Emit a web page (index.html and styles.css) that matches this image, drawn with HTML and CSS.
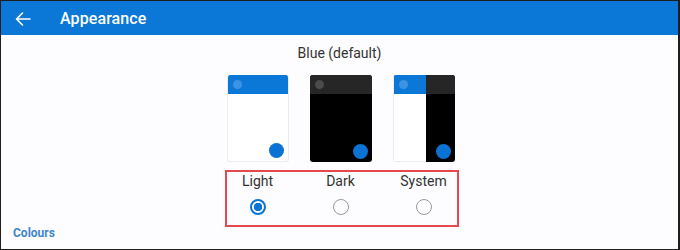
FILE: index.html
```html
<!DOCTYPE html>
<html lang="en">
<head>
    <meta charset="UTF-8">
    <meta name="viewport" content="width=device-width, initial-scale=1.0">
    <title>Appearance</title>
    <link rel="stylesheet" href="styles.css">
</head>
<body>
    <div class="frame">
        <header class="topbar">
            <svg class="back" width="16" height="14" viewBox="0 0 16 14">
                <path d="M15 7H1.5 M7.5 1 L1.5 7 L7.5 13" fill="none" stroke="#fff" stroke-width="1.6" stroke-linecap="round" stroke-linejoin="round"/>
            </svg>
            <span class="title">Appearance</span>
        </header>

        <main class="content">
            <p class="theme-name">Blue (default)</p>

            <div class="cards">
                <div class="card light">
                    <div class="card-head"><span class="dot"></span></div>
                    <span class="fab"></span>
                </div>
                <div class="card dark">
                    <div class="card-head"><span class="dot"></span></div>
                    <span class="fab"></span>
                </div>
                <div class="card system">
                    <div class="half half-light">
                        <div class="card-head"><span class="dot"></span></div>
                    </div>
                    <div class="half half-dark">
                        <div class="card-head"></div>
                    </div>
                    <span class="fab"></span>
                </div>
            </div>

            <div class="modes">
                <label class="mode">
                    <span class="mode-label">Light</span>
                    <span class="radio checked"></span>
                </label>
                <label class="mode">
                    <span class="mode-label">Dark</span>
                    <span class="radio"></span>
                </label>
                <label class="mode">
                    <span class="mode-label">System</span>
                    <span class="radio"></span>
                </label>
            </div>

            <div class="section-title">Colours</div>
        </main>
    </div>
</body>
</html>
```

FILE: styles.css
```css
* {
    box-sizing: border-box;
}
body {
    margin: 0;
    font-family: Roboto, "Noto Sans", sans-serif;
    background: #1e1e1e;
}
.frame {
    width: 680px;
    height: 250px;
    border: 1px solid #1e1e1e;
    border-right-width: 2px;
    background: #fdfcfe;
    overflow: hidden;
}
.topbar {
    height: 34px;
    background: #0b78d7;
    display: flex;
    align-items: center;
    padding-left: 14px;
    color: #fff;
}
.back {
    margin-right: 29px;
    margin-top: 1px;
}
.title {
    font-size: 16px;
    font-weight: 500;
    letter-spacing: 0.1px;
}
.content {
    position: relative;
}
.theme-name {
    margin: 0;
    padding-top: 9px;
    text-align: center;
    font-size: 14px;
    line-height: 18px;
    color: #333;
}
.cards {
    display: flex;
    justify-content: center;
    gap: 21px;
    margin-top: 13px;
    padding-left: 2px;
}
.card {
    position: relative;
    width: 62px;
    height: 87px;
    border-radius: 3px;
    overflow: hidden;
    display: flex;
}
.card-head {
    height: 19px;
    width: 100%;
    position: relative;
}
.card .dot {
    position: absolute;
    left: 5px;
    top: 5px;
    width: 9px;
    height: 9px;
    border-radius: 50%;
}
.fab {
    position: absolute;
    right: 4px;
    bottom: 3px;
    width: 15px;
    height: 15px;
    border-radius: 50%;
    background: #0a73d3;
}
.light,
.half-light {
    background: #fff;
}
.light {
    border: 1px solid #ececec;
    border-top: none;
}
.light .card-head,
.half-light .card-head {
    background: #0b78d7;
}
.light .dot,
.half-light .dot {
    background: #3c93e2;
}
.dark,
.half-dark {
    background: #000;
}
.dark .card-head,
.half-dark .card-head {
    background: #262626;
}
.dark .dot {
    background: #4b4b4b;
}
.half {
    height: 100%;
}
.half-light {
    width: 33px;
    border-left: 1px solid #ececec;
    border-bottom: 1px solid #ececec;
}
.half-dark {
    flex: 1;
}
.modes {
    display: flex;
    gap: 21px;
    width: 234px;
    margin: 8px auto 0;
    padding: 1px 2px 0 0;
    height: 57px;
    border: 2px solid #e5484d;
    position: relative;
    left: 2px;
}
.mode {
    width: 62px;
    display: flex;
    flex-direction: column;
    align-items: center;
}
.mode-label {
    font-size: 14px;
    line-height: 16px;
    color: #333;
}
.radio {
    margin-top: 10px;
    width: 16px;
    height: 16px;
    border-radius: 50%;
    border: 1.5px solid #9a9a9a;
}
.radio.checked {
    border: 2px solid #0b74d4;
    background: radial-gradient(circle, #0b74d4 0 4px, #fff 4.5px);
}
.section-title {
    padding-left: 12px;
    margin-top: -1px;
    font-size: 12px;
    font-weight: 700;
    line-height: 14px;
    color: #3f86c8;
}
```
